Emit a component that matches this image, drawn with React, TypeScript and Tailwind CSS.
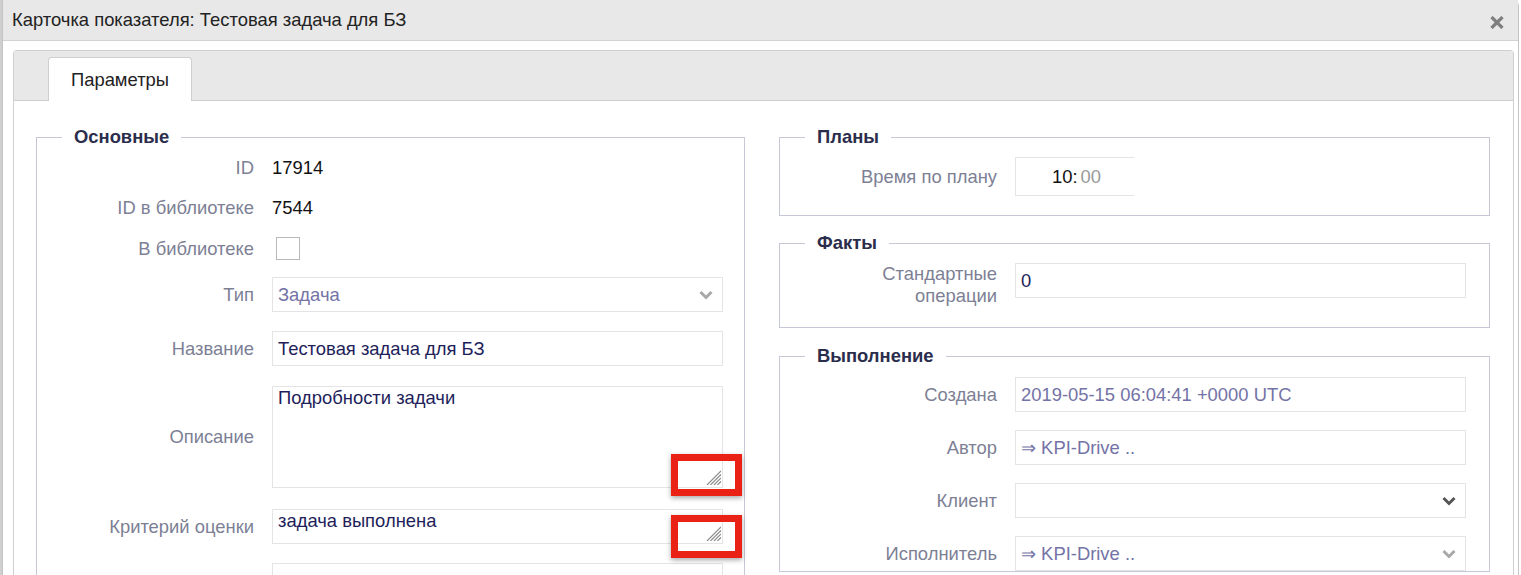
import type {ReactNode} from 'react';

const font = "font-['Liberation_Sans',Arial,sans-serif]";

function Chevron({dark}: {dark?: boolean}) {
    return (
        <svg width="14" height="10" viewBox="0 0 14 10" className="shrink-0">
            <path
                d="M1.5 2 L7 7.5 L12.5 2"
                fill="none"
                stroke={dark ? '#555' : '#a8a8a8'}
                strokeWidth="3"
            />
        </svg>
    );
}

function Grip() {
    return (
        <svg
            width="16"
            height="16"
            viewBox="0 0 16 16"
            className="absolute bottom-[2px] right-[1px]"
        >
            <g stroke="#8c8c8c" strokeWidth="1.2">
                <line x1="2" y1="16" x2="16" y2="2" />
                <line x1="5.5" y1="16" x2="16" y2="5.5" />
                <line x1="9" y1="16" x2="16" y2="9" />
                <line x1="12.5" y1="16" x2="16" y2="12.5" />
            </g>
        </svg>
    );
}

function Row({
    label,
    children,
    top,
    className = '',
}: {
    label: ReactNode;
    children: ReactNode;
    top?: boolean;
    className?: string;
}) {
    return (
        <div className={`flex gap-[18px] ${top ? 'items-start' : 'items-center'} ${className}`}>
            <div
                className={`w-[217px] shrink-0 text-right text-[18.4px] text-[#7d7f95] ${
                    top ? 'leading-[22px]' : 'leading-[20px]'
                }`}
            >
                {label}
            </div>
            {children}
        </div>
    );
}

function Field({
    value,
    disabled,
    select,
    dark,
}: {
    value?: string;
    disabled?: boolean;
    select?: boolean;
    dark?: boolean;
}) {
    return (
        <div
            className={`flex h-[35px] w-[451px] items-center justify-between border border-[#e4e4e4] pl-[5px] pr-[9px] text-[18.4px] leading-[20px] ${
                disabled ? 'text-[#7473a6]' : 'text-[#1e1e5a]'
            }`}
        >
            <span>{value}</span>
            {select && <Chevron dark={dark} />}
        </div>
    );
}

function Area({value, h}: {value: string; h: string}) {
    return (
        <div
            className={`relative w-[451px] border border-[#e4e4e4] pl-[5px] pt-[1px] text-[18.4px] leading-[20px] text-[#1e1e5a] ${h}`}
        >
            {value}
            <Grip />
        </div>
    );
}

function Box({
    title,
    children,
    className = '',
}: {
    title: string;
    children: ReactNode;
    className?: string;
}) {
    return (
        <fieldset className={`border border-[#c7c8d7] ${className}`}>
            <legend className="ml-[25px] px-[12px] text-[18.4px] font-bold leading-[20px] text-[#2b2d4c]">
                {title}
            </legend>
            {children}
        </fieldset>
    );
}

export default function App() {
    return (
        <div className={`relative flex h-[575px] w-[1521px] overflow-hidden bg-white ${font}`}>
            <div className="w-[2px] shrink-0 bg-[#cfcfcf]" />
            <div className="flex w-[1517px] flex-col rounded-tr-[6px] border-x border-[#c4c4c4]">
                <header className="flex h-[41px] shrink-0 items-center justify-between border-b border-[#d2d2d2] bg-[#e8e8e8] pl-[9px] pr-[14px]">
                    <span className="text-[18.4px] text-[#222]">
                        Карточка показателя: Тестовая задача для БЗ
                    </span>
                    <svg width="14" height="13" viewBox="0 0 14 13" className="mt-[5px]">
                        <g stroke="#7e7e7e" strokeWidth="3.2">
                            <line x1="1.5" y1="1" x2="12.5" y2="12" />
                            <line x1="12.5" y1="1" x2="1.5" y2="12" />
                        </g>
                    </svg>
                </header>

                <div className="flex-1 pl-[10px] pr-[4px] pt-[9px]">
                    <div className="flex h-full flex-col rounded-t-[4px] border border-b-0 border-[#cfcfcf]">
                        <div className="flex h-[50px] shrink-0 items-end border-b border-[#cfcfcf] bg-[#e8e8e8] pl-[34px]">
                            <div className="-mb-px flex h-[44px] w-[144px] items-center justify-center rounded-t-[4px] border border-b-0 border-[#cfcfcf] bg-white text-[18.4px] text-[#222]">
                                Параметры
                            </div>
                        </div>

                        <div className="flex gap-[34px] pl-[22px] pt-[26px]">
                            <Box title="Основные" className="w-[709px] pt-[11px]">
                                <div className="flex flex-col">
                                    <Row label="ID">
                                        <span className="text-[18.4px] leading-[20px] text-[#111]">17914</span>
                                    </Row>
                                    <Row label="ID в библиотеке" className="mt-[20px]">
                                        <span className="text-[18.4px] leading-[20px] text-[#111]">7544</span>
                                    </Row>
                                    <Row label="В библиотеке" className="mt-[19px]">
                                        <div className="ml-[4px] h-[23px] w-[24px] border border-[#b9b9b9]" />
                                    </Row>
                                    <Row label="Тип" className="mt-[17px]">
                                        <Field value="Задача" disabled select />
                                    </Row>
                                    <Row label="Название" className="mt-[19px]">
                                        <Field value="Тестовая задача для БЗ" />
                                    </Row>
                                    <Row label="Описание" className="mt-[20px]">
                                        <Area value="Подробности задачи" h="h-[102px]" />
                                    </Row>
                                    <Row label="Критерий оценки" className="mt-[21px]">
                                        <Area value="задача выполнена" h="h-[35px]" />
                                    </Row>
                                    <Row label="" className="mt-[19px]">
                                        <Field />
                                    </Row>
                                </div>
                            </Box>

                            <div className="flex w-[711px] flex-col">
                                <Box title="Планы" className="pb-[19px] pt-[10px]">
                                    <Row label="Время по плану">
                                        <div className="flex h-[39px] w-[119px] items-center border-y border-l border-[#e4e4e4] pl-[36px] text-[18.4px]">
                                            <span className="text-[#111]">10:</span>
                                            <span className="ml-[3px] text-[#9a9a9a]">00</span>
                                        </div>
                                    </Row>
                                </Box>
                                <Box title="Факты" className="mt-[17px] pb-[20px] pt-[10px]">
                                    <Row label={<>Стандартные<br />операции</>} top>
                                        <Field value="0" />
                                    </Row>
                                </Box>
                                <Box title="Выполнение" className="mt-[18px] pt-[11px]">
                                    <div className="flex flex-col gap-[18px]">
                                        <Row label="Создана">
                                            <Field value="2019-05-15 06:04:41 +0000 UTC" disabled />
                                        </Row>
                                        <Row label="Автор">
                                            <Field value="⇒ KPI-Drive .." disabled />
                                        </Row>
                                        <Row label="Клиент">
                                            <Field select dark />
                                        </Row>
                                        <Row label="Исполнитель">
                                            <Field value="⇒ KPI-Drive .." disabled select />
                                        </Row>
                                    </div>
                                </Box>
                            </div>
                        </div>
                    </div>
                </div>
            </div>

            {/* annotation frames round the resize grips */}
            <div className="absolute left-[671px] top-[454px] h-[42px] w-[71px] border-[7px] border-[#ea2216] shadow-[0_2px_5px_rgba(0,0,0,0.35)]" />
            <div className="absolute left-[671px] top-[515px] h-[43px] w-[71px] border-[7px] border-[#ea2216] shadow-[0_2px_5px_rgba(0,0,0,0.35)]" />
        </div>
    );
}
